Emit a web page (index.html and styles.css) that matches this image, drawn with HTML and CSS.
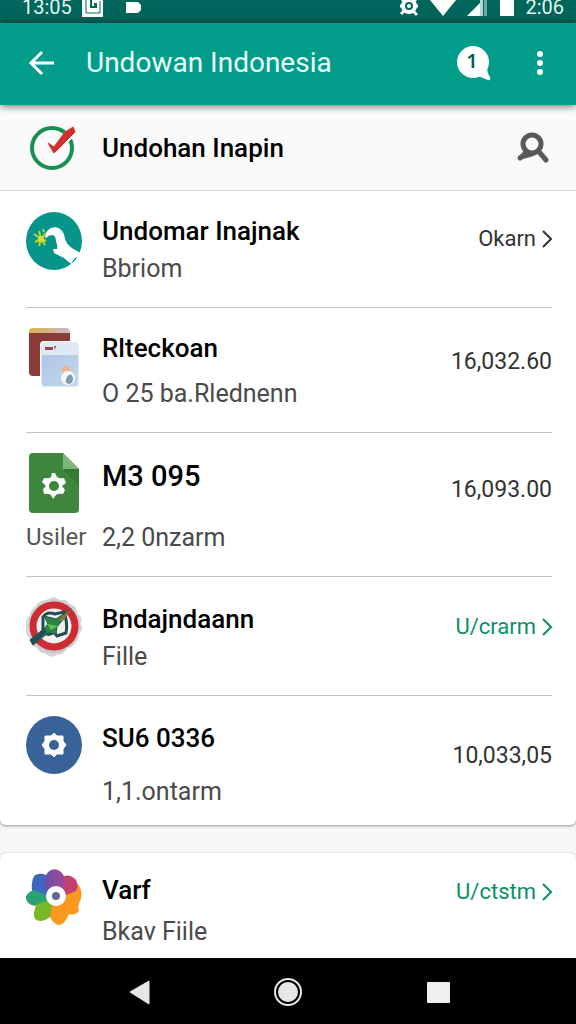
FILE: index.html
```html
<!DOCTYPE html>
<html lang="id">
<head>
<meta charset="utf-8">
<meta name="viewport" content="width=device-width, initial-scale=1">
<title>Undowan Indonesia</title>
<link rel="stylesheet" href="styles.css">
</head>
<body>
<div class="screen">
  <div class="status">
    <div class="status-group status-left">
      <span>13:05</span>
      <svg width="22" height="20" viewBox="0 0 22 20"><path d="M0 0H21V19H0Z" fill="#fff"/><path d="M4 0V15H18V3" fill="none" stroke="#00695c" stroke-width="1"/><path d="M8 0H15V10H8Z" fill="#00695c"/><path d="M10 2H15V5H12V8H10Z" fill="#fff"/></svg>
      <svg class="status-tag" width="16" height="20" viewBox="0 0 16 20"><path d="M0 4H12L15 7V12L12 15H0Z" fill="#fff"/></svg>
    </div>
    <div class="status-group status-right">
      <svg width="20" height="22" viewBox="0 0 20 22"><g fill="none" stroke="#fff"><circle cx="10" cy="10" r="6" stroke-width="4"/><path d="M3 3L6 6M17 3L14 6M2 18L6 14M18 19L14 15M1 10H4M16 10H19" stroke-width="3"/></g><circle cx="10" cy="10" r="2" fill="#fff"/></svg>
      <svg width="26" height="22" viewBox="0 0 26 22"><path d="M0 4Q13-5 26 4L13 20Z" fill="#fff"/></svg>
      <svg width="22" height="22" viewBox="0 0 22 22"><path d="M0 20L13 7V20Z" fill="#fff"/><path d="M13 0H16V20H13Z" fill="#b5d5d0"/><path d="M17 0H20V20H17Z" fill="#6ba8a0"/></svg>
      <svg width="14" height="22" viewBox="0 0 14 22"><path d="M0 1H14V20H0Z" fill="#fff"/></svg>
      <span>2:06</span>
    </div>
  </div>

  <header class="appbar">
    <button class="icon-button back" aria-label="Kembali">
      <svg width="28" height="28" viewBox="0 0 28 28"><path d="M26 14H3M14 3L3 14L14 25" fill="none" stroke="#fff" stroke-width="3"/></svg>
    </button>
    <h1 class="appbar-title">Undowan Indonesia</h1>
    <button class="icon-button messages" aria-label="Pesan, 1 baru">
      <svg width="36" height="36" viewBox="0 0 36 36"><circle cx="17" cy="17" r="16" fill="#fff"/><path d="M22 31L31 23Q31 28 34 32Q35 36 32 35Z" fill="#fff"/></svg>
      <span class="badge">1</span>
    </button>
    <button class="icon-button more" aria-label="Menu">
      <svg width="8" height="28" viewBox="0 0 8 28" fill="#fff"><circle cx="4" cy="5" r="3"/><circle cx="4" cy="14" r="3"/><circle cx="4" cy="23" r="3"/></svg>
    </button>
  </header>

  <main class="content">
    <section class="card card-first">
      <div class="search-row">
        <svg class="icon" viewBox="0 0 58 60"><circle cx="26" cy="30" r="20" fill="none" stroke="#149153" stroke-width="4"/><path d="M22 25L28 28L43 12L47 9L50 15L28 35Z" fill="#fafafa" stroke="#fafafa" stroke-width="3"/><path d="M22 25L28 29L39 14L44 11L47 9L49 14L28 35Z" fill="#d32f2f" stroke="#d32f2f"/></svg>
        <h2 class="title search-title">Undohan Inapin</h2>
        <button class="icon-button search" aria-label="Cari">
          <svg width="34" height="34" viewBox="0 0 34 34"><g fill="none" stroke="#58595b" stroke-linecap="round"><circle cx="16" cy="13" r="9" stroke-width="5"/><path d="M24 22L30 29" stroke-width="5"/><path d="M9 23L4 27" stroke-width="5"/></g><path d="M6 22L9 19L18 25L7 28Z" fill="#58595b"/></svg>
        </button>
      </div>

      <ul class="list">
        <li class="row">
          <svg class="icon" viewBox="0 0 58 60"><ellipse cx="28" cy="30" rx="28" ry="29" fill="#07958b"/><path d="M19 26C20 16 31 14 35 19Q38 21 39 28Q41 36 55 42C54 45 53 46 51 46Q46 48 46 53Q42 51 38 47L28 42L27 38L31 38Q32 34 30 31Q30 24 26 24Q23 24 20 27Z" fill="#fff"/><path d="M15 28L8 23M15 28L9 31M15 28L13 35M15 28L19 34M15 28L13 20M15 28L20 22M15 28L20 30M17 18L18 21" stroke="#b7d33c" stroke-width="2"/><circle cx="15" cy="28" r="3" fill="#d9dc30"/></svg>
          <div class="body body-tight"><h3 class="title">Undomar Inajnak</h3><p class="sub">Bbriom</p></div>
          <a class="value value-high" href="#okarn">Okarn <svg class="chevron" viewBox="0 0 10 18"><path d="M1 1L9 9L1 17"/></svg></a>
        </li>
        <li class="row">
          <svg class="icon" viewBox="0 0 58 60"><defs><linearGradient id="top"><stop stop-color="#dfb04c"/><stop offset="1" stop-color="#c9b9c8"/></linearGradient><linearGradient id="glass" x2="1" y2="1"><stop stop-color="#adc6e4"/><stop offset="1" stop-color="#c4d7ed"/></linearGradient></defs><rect x="3" y="0" width="41" height="44" rx="4" fill="url(#top)"/><path d="M3 5H44V48H7Q3 48 3 44Z" fill="#8c3b38"/><rect x="14" y="13" width="40" height="47" rx="4" fill="#fff"/><rect x="15" y="14" width="38" height="45" rx="4" fill="#dfe9f5"/><path d="M16 27H52V55Q52 58 49 58H19Q16 58 16 55Z" fill="url(#glass)"/><path d="M19 19H27V22H19ZM28 18H30L29 22" fill="#9b4550"/><circle cx="40" cy="42" r="4" fill="#edb58f"/><circle cx="42" cy="50" r="7" fill="#f5f8fb"/><ellipse cx="43" cy="51" rx="4" ry="5" fill="#7e99ad"/><path d="M38 49Q41 43 45 46Q39 48 40 55Z" fill="#fff"/></svg>
          <div class="body body-medium"><h3 class="title">Rlteckoan</h3><p class="sub">O 25 ba.Rlednenn</p></div>
          <span class="value">16,032.60</span>
        </li>
        <li class="row">
          <div class="lead">
            <svg class="icon" viewBox="0 0 58 60"><path d="M7 0H37L53 16V56Q53 60 49 60H7Q3 60 3 56V4Q3 0 7 0Z" fill="#3e863d"/><path d="M37 16H53V32Z" fill="#347933"/><path d="M37 0L53 16H37Z" fill="#7fb57a"/><path d="M26 20H29L31 24Q34 26 38 25L40 30L36 33L39 37L37 41Q32 40 30 42L27 46L25 42Q22 40 18 41L17 36L20 33L16 29L18 25Q23 26 25 24Z" fill="#fff"/><circle cx="28" cy="33" r="5" fill="#3e863d"/></svg>
            <span class="note">Usiler</span>
          </div>
          <div class="body body-wide"><h3 class="title title-large">M3 095</h3><p class="sub">2,2 0nzarm</p></div>
          <span class="value value-mid">16,093.00</span>
        </li>
        <li class="row">
          <svg class="icon" viewBox="0 0 58 60"><defs><radialGradient id="seal"><stop offset="0.7" stop-color="#b4aeb0"/><stop offset="1" stop-color="#dfdfdf"/></radialGradient></defs><path d="M28 0Q33 5 39 3Q43 8 49 10Q50 17 55 21Q53 27 56 32Q51 37 51 43Q47 50 41 51Q37 58 31 57Q25 62 20 56Q13 56 11 50Q4 48 4 41Q-1 36 1 30Q-1 23 4 19Q5 12 10 10Q14 3 19 4Z" fill="url(#seal)" stroke="#d2d0d1"/><circle cx="28" cy="29" r="21" fill="#f3f2f1" stroke="#cb2d32" stroke-width="7"/><path d="M17 20Q21 14 29 17L38 15Q42 27 40 36L31 39L28 35Q23 40 17 35Z" fill="#eaf2ec" stroke="#254c50" stroke-width="3"/><path d="M4 43L7 48L22 36L30 37L31 30L45 12L30 22L18 19L22 27L18 32Z" fill="#2d8448" stroke="#235348"/><path d="M33 22L47 10L36 25Z" fill="#937041"/><path d="M4 43L18 31L21 35L7 48Z" fill="#21505c"/><path d="M21 27L33 29L25 33Z" fill="#5dc156"/></svg>
          <div class="body body-tight body-low"><h3 class="title">Bndajndaann</h3><p class="sub">Fille</p></div>
          <a class="value value-link" href="#urarm">U/crarm <svg class="chevron" viewBox="0 0 10 18"><path d="M1 1L9 9L1 17"/></svg></a>
        </li>
        <li class="row row-last">
          <svg class="icon" viewBox="0 0 58 60"><ellipse cx="28" cy="29" rx="28" ry="29" fill="#386398"/><path d="M28 17L31 20L37 20L37 25L40 29L37 33L37 38L31 38L28 41L25 38L19 38L19 33L16 29L19 25L19 20L25 20Z" fill="#fff" stroke="#fff" stroke-linejoin="round"/><circle cx="28" cy="29" r="5" fill="#386398"/></svg>
          <div class="body body-loose body-low"><h3 class="title">SU6 0336</h3><p class="sub">1,1.ontarm</p></div>
          <span class="value value-low">10,033,05</span>
        </li>
      </ul>
    </section>

    <section class="card card-next">
      <ul class="list">
        <li class="row row-top">
          <svg class="icon" viewBox="0 0 58 60"><defs><linearGradient id="violet"><stop stop-color="#6552a9"/><stop offset="1" stop-color="#a74795"/></linearGradient></defs><path d="M28 30L7 27Q4 16 8 8Q13 4 20 7L30 10Z" fill="#3d68be"/><path d="M28 30L8 22Q-1 25 0 31Q2 38 11 38L24 41Z" fill="#2ba273"/><path d="M28 30L11 36Q6 45 9 51Q15 56 24 49L31 40Z" fill="#79b927"/><path d="M28 30L52 16Q57 23 55 31Q51 38 53 43Q49 48 43 46Q38 58 32 57Q27 55 24 49Z" fill="#fb981f"/><path d="M28 30L34 10Q43 4 50 12Q53 18 50 23L40 27Z" fill="#c43f70"/><path d="M28 30L18 18Q18 5 25 2Q33-1 38 8Q41 16 36 23Z" fill="url(#violet)"/><circle cx="30" cy="28" r="10" fill="#fff"/><circle cx="30" cy="28" r="4" fill="#656695"/></svg>
          <div class="body body-last body-low"><h3 class="title">Varf</h3><p class="sub">Bkav Fiile</p></div>
          <a class="value value-link value-top" href="#utstm">U/ctstm <svg class="chevron" viewBox="0 0 10 18"><path d="M1 1L9 9L1 17"/></svg></a>
        </li>
      </ul>
    </section>
  </main>

  <nav class="navbar" aria-label="Sistem">
    <button class="icon-button" aria-label="Kembali"><svg width="28" height="28" viewBox="0 0 28 28"><path d="M25 3V26L6 14Z" fill="#e6e6e6" stroke="#e6e6e6" stroke-linejoin="round"/></svg></button>
    <button class="icon-button" aria-label="Beranda"><svg width="28" height="28" viewBox="0 0 28 28"><circle cx="14" cy="14" r="13" fill="none" stroke="#e6e6e6" stroke-width="2"/><circle cx="14" cy="14" r="10" fill="#e6e6e6"/></svg></button>
    <button class="icon-button" aria-label="Aplikasi terbaru"><svg width="28" height="28" viewBox="0 0 28 28"><rect x="3" y="4" width="23" height="21" rx="1" fill="#eeeff0"/></svg></button>
  </nav>
</div>
</body>
</html>
```
FILE: styles.css
```css
* { box-sizing: border-box; }

body {
  margin: 0;
  background: #f6f7f7;
  color: #000;
  font-family: Roboto, "Liberation Sans", sans-serif;
}

h1, h2, h3, p, ul { margin: 0; padding: 0; }
ul { list-style: none; }
svg { display: block; flex: none; }

.screen {
  display: flex;
  flex-direction: column;
  height: 100vh;
}

.icon-button {
  position: relative;
  display: flex;
  align-items: center;
  justify-content: center;
  padding: 0;
  border: 0;
  background: none;
}

/* System status bar */
.status {
  display: flex;
  flex: none;
  align-items: flex-end;
  justify-content: space-between;
  height: 23px;
  padding: 0 12px 5px 22px;
  overflow: hidden;
  background: #00655a;
  color: #e4f3f1;
  font-size: 20px;
  line-height: 22px;
}
.status-group { display: flex; align-items: flex-end; }
.status-left { gap: 10px; }
.status-tag { margin-left: 12px; }
.status-right { gap: 11px; }

/* App bar */
.appbar {
  position: relative;
  z-index: 1;
  display: flex;
  flex: none;
  align-items: center;
  height: 82px;
  padding: 0 32px 2px 28px;
  background: #029c8a;
  box-shadow: 0 1px 8px rgba(0, 0, 0, 0.6);
  color: #e9fffb;
}
.appbar-title {
  flex: 1;
  margin-left: 30px;
  font-size: 28px;
  font-weight: 400;
  line-height: 40px;
}
.messages { margin-right: 44px; }
.badge {
  position: absolute;
  top: 4px;
  left: 0;
  width: 32px;
  color: #075e54;
  font-family: "Noto Sans", sans-serif;
  font-size: 20px;
  font-weight: 600;
  line-height: 24px;
  text-align: center;
}

/* Cards */
.content {
  flex: 1;
  min-height: 0;
  overflow: hidden;
}
.card {
  background: #fff;
  box-shadow: 0 1px 3px rgba(0, 0, 0, 0.4);
}
.card-first { border-radius: 0 0 6px 6px; }
.card-next { margin-top: 28px; border-radius: 6px 6px 0 0; }

.search-row {
  display: flex;
  align-items: center;
  gap: 18px;
  height: 86px;
  padding: 0 26px;
  border-bottom: 1px solid #dcdddd;
  background: #fafafa;
}
.search-title { flex: 1; }

/* List rows */
.list { padding: 0 24px 0 26px; }
.row {
  display: flex;
  align-items: flex-start;
  gap: 18px;
  padding: 20px 0 22px;
  border-bottom: 1px solid #c4c4c6;
}
.row-last { padding-bottom: 17px; border-bottom: 0; }
.row-top { padding-top: 15px; }
.icon { width: 58px; height: 60px; flex: none; }
.lead {
  display: flex;
  flex-direction: column;
  gap: 8px;
  width: 58px;
}
.note {
  color: #555;
  font-size: 24px;
  line-height: 32px;
  white-space: nowrap;
}
.body {
  display: flex;
  flex: 1;
  flex-direction: column;
  min-width: 0;
  padding-top: 4px;
}
.body-low { padding-top: 6px; }
.body-tight { gap: 6px; }
.body-medium { gap: 14px; }
.body-loose { gap: 22px; }
.body-wide { gap: 30px; padding-top: 7px; }
.body-last { gap: 10px; }
.title {
  font-size: 26px;
  font-weight: 500;
  line-height: 32px;
}
.title-large { font-size: 29px; }
.sub {
  color: #4a4a4a;
  font-size: 25px;
  line-height: 32px;
}
.value {
  display: flex;
  align-items: center;
  gap: 6px;
  margin-top: 18px;
  color: #333;
  font-size: 23px;
  line-height: 32px;
  text-decoration: none;
}
a.value { font-size: 22px; }
.value-mid { margin-top: 21px; }
.value-high { margin-top: 12px; }
.value-top { margin-top: 8px; }
.value-low { margin-top: 24px; }
.value-link { color: #0a9163; }
.value-link:not(.value-top) { margin-top: 14px; }
.chevron {
  width: 10px;
  height: 18px;
  fill: none;
  stroke: currentColor;
  stroke-width: 2;
}

/* System navigation */
.navbar {
  display: flex;
  flex: none;
  align-items: center;
  justify-content: center;
  gap: 122px;
  height: 66px;
  padding-top: 2px;
  background: #000;
}
```
